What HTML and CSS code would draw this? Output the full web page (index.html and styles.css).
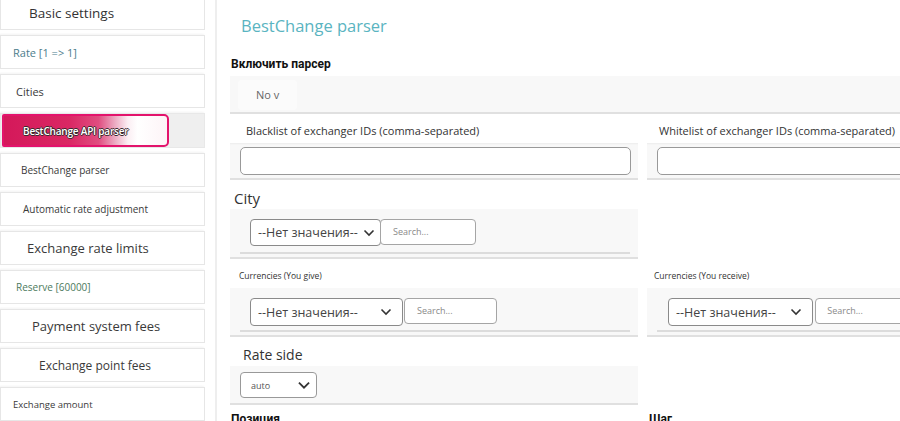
FILE: index.html
```html
<!DOCTYPE html>
<html lang="ru">
<head>
<meta charset="utf-8">
<title>BestChange parser</title>
<link rel="stylesheet" href="styles.css">
</head>
<body>
<div class="app">
  <aside class="sidebar">
    <nav class="nav">
      <div class="nav-item it-basic">Basic settings</div>
      <div class="nav-item it-rate">Rate [1 =&gt; 1]</div>
      <div class="nav-item it-cities">Cities</div>
      <div class="nav-item it-active"><span class="active-btn">BestChange API parser</span></div>
      <div class="nav-item it-parser">BestChange parser</div>
      <div class="nav-item it-auto">Automatic rate adjustment</div>
      <div class="nav-item it-limits">Exchange rate limits</div>
      <div class="nav-item it-reserve">Reserve [60000]</div>
      <div class="nav-item it-payment">Payment system fees</div>
      <div class="nav-item it-point">Exchange point fees</div>
      <div class="nav-item it-amount">Exchange amount</div>
    </nav>
  </aside>
  <main class="main">
    <h1 class="title">BestChange parser</h1>
    <div class="bold-label">Включить парсер</div>
    <div class="band band-enable"><div class="toggle">No v</div></div>

    <div class="grid">
      <div class="cell">
        <div class="lbl lbl-list">Blacklist of exchanger IDs (comma-separated)</div>
        <div class="band band-input"><div class="text-input wide"></div></div>
      </div>
      <div class="cell">
        <div class="lbl lbl-list lbl-right">Whitelist of exchanger IDs (comma-separated)</div>
        <div class="band band-input"><div class="text-input wide-right"></div></div>
      </div>

      <div class="cell">
        <div class="lbl lbl-city">City</div>
        <div class="band band-select">
          <div class="sel-row">
            <div class="select sel-city"><span>--Нет значения--</span><svg class="chev" viewBox="0 0 12 8" width="12" height="8"><path d="M1.5 1.5 L6 6 L10.5 1.5" fill="none" stroke="#333" stroke-width="1.6"/></svg></div>
            <div class="search s-city">Search...</div>
          </div>
          <div class="inner-line"></div>
        </div>
      </div>
      <div class="cell"></div>

      <div class="cell">
        <div class="lbl lbl-small">Currencies (You give)</div>
        <div class="band band-select band-cur">
          <div class="sel-row">
            <div class="select sel-cur"><span>--Нет значения--</span><svg class="chev" viewBox="0 0 12 8" width="12" height="8"><path d="M1.5 1.5 L6 6 L10.5 1.5" fill="none" stroke="#333" stroke-width="1.6"/></svg></div>
            <div class="search s-cur">Search...</div>
          </div>
          <div class="inner-line"></div>
        </div>
      </div>
      <div class="cell">
        <div class="lbl lbl-small lbl-small-right">Currencies (You receive)</div>
        <div class="band band-select band-cur">
          <div class="sel-row sel-row-right">
            <div class="select sel-cur"><span>--Нет значения--</span><svg class="chev" viewBox="0 0 12 8" width="12" height="8"><path d="M1.5 1.5 L6 6 L10.5 1.5" fill="none" stroke="#333" stroke-width="1.6"/></svg></div>
            <div class="search s-cur s-right">Search...</div>
          </div>
          <div class="inner-line inner-right"></div>
        </div>
      </div>

      <div class="cell">
        <div class="lbl lbl-rate">Rate side</div>
        <div class="band band-rate">
          <div class="select sel-auto"><span>auto</span><svg class="chev" viewBox="0 0 12 8" width="12" height="8"><path d="M1.5 1.5 L6 6 L10.5 1.5" fill="none" stroke="#333" stroke-width="1.6"/></svg></div>
        </div>
      </div>
      <div class="cell"></div>

      <div class="cell"><div class="bold-label bl-pos">Позиция</div></div>
      <div class="cell"><div class="bold-label bl-step">Шаг</div></div>
    </div>
  </main>
</div>
</body>
</html>
```
FILE: styles.css
```css
* { box-sizing: border-box; }
html, body { margin: 0; padding: 0; }
body {
  width: 900px;
  height: 421px;
  overflow: hidden;
  background: #fff;
  color: #333;
  font-family: "Open Sans", "Noto Sans", sans-serif;
}
.app { display: flex; height: 421px; }

/* Sidebar */
.sidebar {
  width: 217px;
  flex: none;
  border-right: 2px solid #eeeeee;
  overflow: hidden;
}
.nav {
  display: flex;
  flex-direction: column;
  gap: 5px;
  width: 205px;
  margin-top: -4px;
}
.nav-item {
  height: 34px;
  display: flex;
  align-items: center;
  background: #fff;
  border: 1px solid #e6e6e6;
  box-shadow: -1px -1px 2px rgba(0, 0, 0, 0.05);
  font-size: 10px;
  color: #3a3a3a;
  white-space: nowrap;
}
.it-basic { padding-left: 28px; font-size: 13.5px; color: #333; }
.it-rate { padding-left: 12px; font-size: 11px; color: #4d7d8c; }
.it-cities { padding-left: 15px; font-size: 11px; }
.it-parser { padding-left: 20px; font-size: 10px; }
.it-auto { padding-left: 22px; font-size: 10px; }
.it-limits { padding-left: 26px; font-size: 13px; }
.it-reserve { padding-left: 15px; font-size: 10px; color: #4c7a5c; }
.it-payment { padding-left: 31px; font-size: 13px; }
.it-point { padding-left: 38px; font-size: 12px; }
.it-amount { padding-left: 12px; font-size: 9.5px; }
.it-active {
  height: 35px;
  background: #efefef;
  padding-left: 1px;
  align-items: stretch;
  border-color: #e8e8e8;
}
.active-btn {
  width: 167px;
  display: flex;
  align-items: center;
  padding-left: 19px;
  border: 2px solid #e3136c;
  border-radius: 2px 5px 5px 2px;
  background: linear-gradient(90deg, #d4185a 0%, #da2864 40%, #e04d80 58%, #ecaac2 68%, #fbeef3 76%, #ffffff 82%, #fdf4f7 100%);
  color: #fff;
  font-size: 10px;
  font-weight: 600;
  letter-spacing: -0.2px;
  text-shadow: 1px 0 0 #3a2a2e, -1px 0 0 #3a2a2e, 0 1px 0 #3a2a2e, 0 -1px 0 #3a2a2e;
}

/* Main */
.main {
  flex: 1;
  min-width: 0;
  padding-left: 13px;
  overflow: hidden;
}
.title {
  margin: 0;
  height: 56px;
  padding: 14px 0 0 11px;
  font-size: 16.5px;
  line-height: 24px;
  font-weight: 400;
  color: #5ab4c1;
}
.bold-label {
  height: 20px;
  padding-left: 1px;
  font-family: Roboto, "Liberation Sans", sans-serif;
  font-weight: 700;
  font-size: 12px;
  line-height: 16px;
  color: #111;
  padding-top: 0;
}
.band {
  background: #f8f8f8;
  border-bottom: 2px solid #e0e0e0;
}
.band-enable {
  height: 38px;
  padding: 4px 0 0 8px;
  width: 670px;
}
.toggle {
  width: 59px;
  height: 30px;
  border-radius: 4px;
  background: #fbfbfb;
  padding-left: 18px;
  font-size: 11px;
  line-height: 30px;
  color: #666;
}

.grid {
  display: grid;
  grid-template-columns: 408px 290px;
  column-gap: 9px;
}
.lbl { white-space: nowrap; color: #333; }
.lbl-list {
  height: 29px;
  padding: 9px 0 0 16px;
  font-size: 11px;
  line-height: 16px;
}
.lbl-right { padding-left: 12px; }
.band-input {
  height: 37px;
  padding: 4px 0 0 10px;
  box-shadow: inset 0 2px 2px -1px rgba(0, 0, 0, 0.05);
}
.text-input {
  height: 28px;
  background: #fff;
  border: 1px solid #999;
  border-radius: 5px;
}
.wide { width: 391px; }
.wide-right { width: 300px; }

.lbl-city {
  height: 29px;
  padding: 9px 0 0 4px;
  font-size: 15px;
  line-height: 18px;
}
.band-select {
  height: 50px;
  padding: 10px 8px 3px 10px;
  display: flex;
  flex-direction: column;
}
.band-cur { height: 49px; }
.band-cur .inner-line { margin-top: 4px; }
.sel-row { display: flex; align-items: flex-start; padding-left: 10px; }
.sel-row-right { padding-left: 11px; }
.select {
  height: 27px;
  display: flex;
  align-items: center;
  justify-content: space-between;
  background: #fff;
  border: 1px solid #8a8a8a;
  border-radius: 4px;
  padding: 0 8px 0 7px;
  font-size: 12.5px;
  color: #444;
  white-space: nowrap;
}
.band-cur .select { height: 28px; }
.sel-city { width: 131px; padding-right: 5px; }
.sel-cur { width: 153px; padding-right: 10px; }
.search {
  height: 26px;
  background: #fff;
  border: 1px solid #a5a5a5;
  border-radius: 4px;
  margin-left: -1px;
  padding-left: 12px;
  font-size: 9px;
  line-height: 24px;
  color: #8a8a8a;
  white-space: nowrap;
}
.s-city { width: 96px; }
.s-cur { width: 93px; margin-left: 1px; }
.s-right { width: 120px; margin-left: 2px; padding-left: 11px; }
.inner-line {
  margin-top: 6px;
  height: 2px;
  background: #dcdcdc;
}
.inner-right { margin-right: -20px; }

.lbl-small {
  height: 29px;
  padding: 11px 0 0 9px;
  font-size: 8.5px;
  line-height: 12px;
}
.lbl-small-right { padding-left: 7px; }

.lbl-rate {
  height: 29px;
  padding: 9px 0 0 13px;
  font-size: 14px;
  line-height: 18px;
}
.band-rate {
  height: 39px;
  padding: 6px 0 0 10px;
}
.sel-auto {
  width: 77px;
  height: 26px;
  padding: 0 5px 0 10px;
  font-size: 9px;
  color: #555;
  border-color: #999;
}
.sel-auto .chev { width: 14px; height: 9px; }

.bl-pos { padding-top: 6px; padding-left: 1px; }
.bl-step { padding-top: 6px; padding-left: 2px; }
```
